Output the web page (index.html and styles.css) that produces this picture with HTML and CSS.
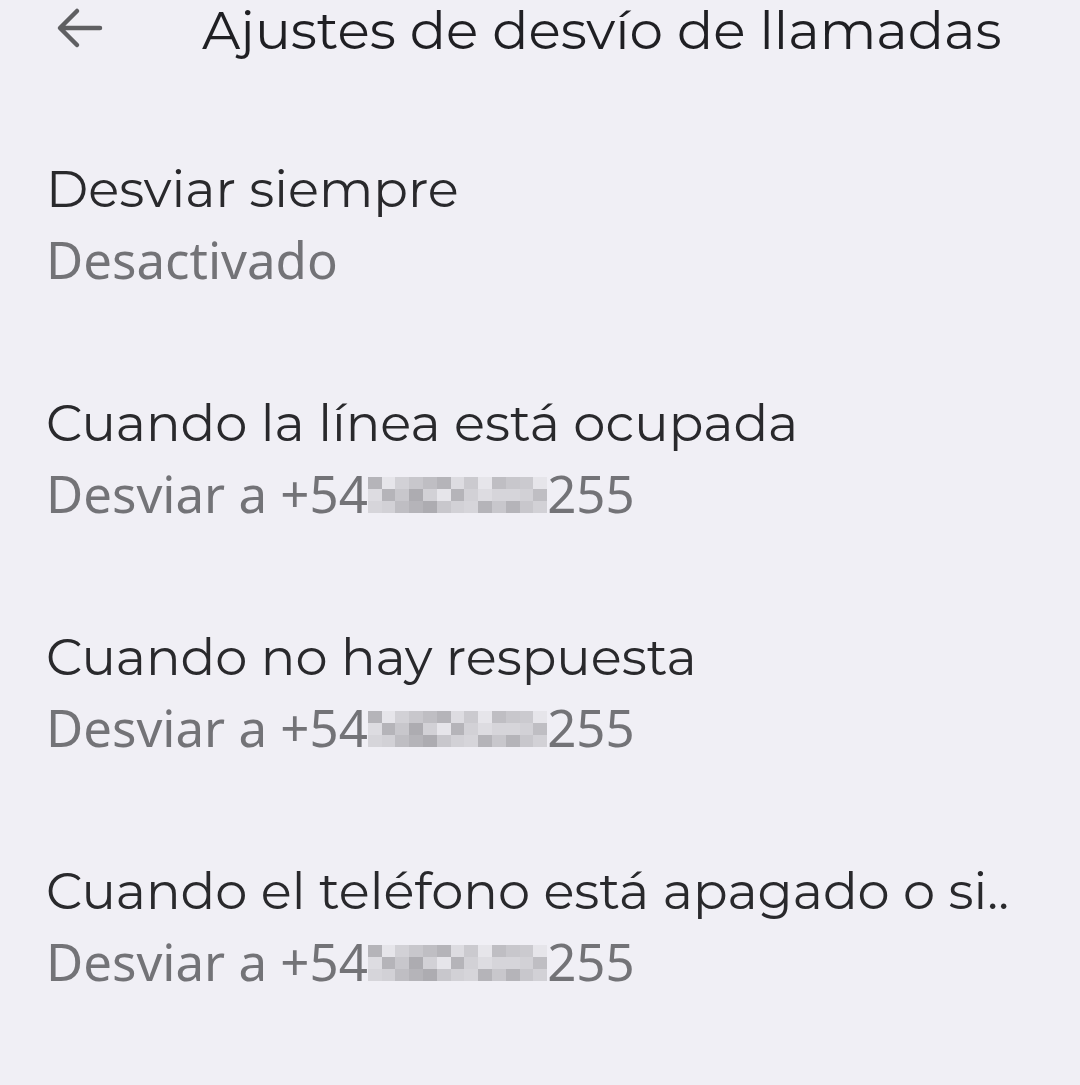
FILE: index.html
```html
<!DOCTYPE html>
<html lang="es">
<head>
<meta charset="utf-8">
<link rel="stylesheet" href="styles.css">
</head>
<body>
<header class="bar">
  <svg class="back" width="48" height="44" viewBox="0 0 48 44"><path d="M45 22H6M22 5L5 22l17 17" fill="none" stroke="#5f5f62" stroke-width="4.5" stroke-linecap="round" stroke-linejoin="round"/></svg>
  <h1 class="title">Ajustes de desvío de llamadas</h1>
</header>
<main class="list">
  <div class="item">
    <div class="item-title">Desviar siempre</div>
    <div class="item-sub">Desactivado</div>
  </div>
  <div class="item">
    <div class="item-title">Cuando la línea está ocupada</div>
    <div class="item-sub">Desviar a +54<span class="blur"></span>255</div>
  </div>
  <div class="item">
    <div class="item-title">Cuando no hay respuesta</div>
    <div class="item-sub">Desviar a +54<span class="blur"></span>255</div>
  </div>
  <div class="item">
    <div class="item-title">Cuando el teléfono está apagado o si..</div>
    <div class="item-sub">Desviar a +54<span class="blur"></span>255</div>
  </div>
</main>
<script>
const shades=['#dddce1','#d2d1d6','#c8c7cc','#bfbec3','#b5b4b9','#e6e5ea','#adacb1','#cbcacf','#d6d5da'];
let s=7;
function rnd(){s=(s*9301+49297)%233280;return s/233280;}
document.querySelectorAll('.blur').forEach(b=>{
  s=7;
  for(let i=0;i<39;i++){
    const c=document.createElement('i');
    c.style.background=shades[Math.floor(rnd()*shades.length)];
    b.appendChild(c);
  }
});
</script>
</body>
</html>
```
FILE: styles.css
```css
html,body{margin:0;padding:0;}
body{background:#f0eff5;width:1080px;height:1085px;overflow:hidden;font-family:"Montserrat","Open Sans","Noto Sans",sans-serif;}
.bar{display:flex;align-items:center;height:60px;padding-left:55px;}
.back{flex:none;margin-top:-4px;}
.title{margin:0 0 0 99px;font-size:53.4px;font-weight:400;color:#1f1f23;line-height:60px;white-space:nowrap;}
.list{display:flex;flex-direction:column;padding:94px 0 0 46px;gap:94px;}
.item{display:flex;flex-direction:column;}
.item-title{font-size:51.2px;line-height:70px;color:#29292c;white-space:nowrap;}
.item-sub{font-family:"Noto Sans",sans-serif;font-size:51px;line-height:70px;color:#737377;white-space:nowrap;display:flex;align-items:center;}
.blur{display:inline-grid;grid-template-columns:repeat(13,13.8px);grid-auto-rows:12.3px;margin-top:4px;}
.blur i{display:block;}
```
